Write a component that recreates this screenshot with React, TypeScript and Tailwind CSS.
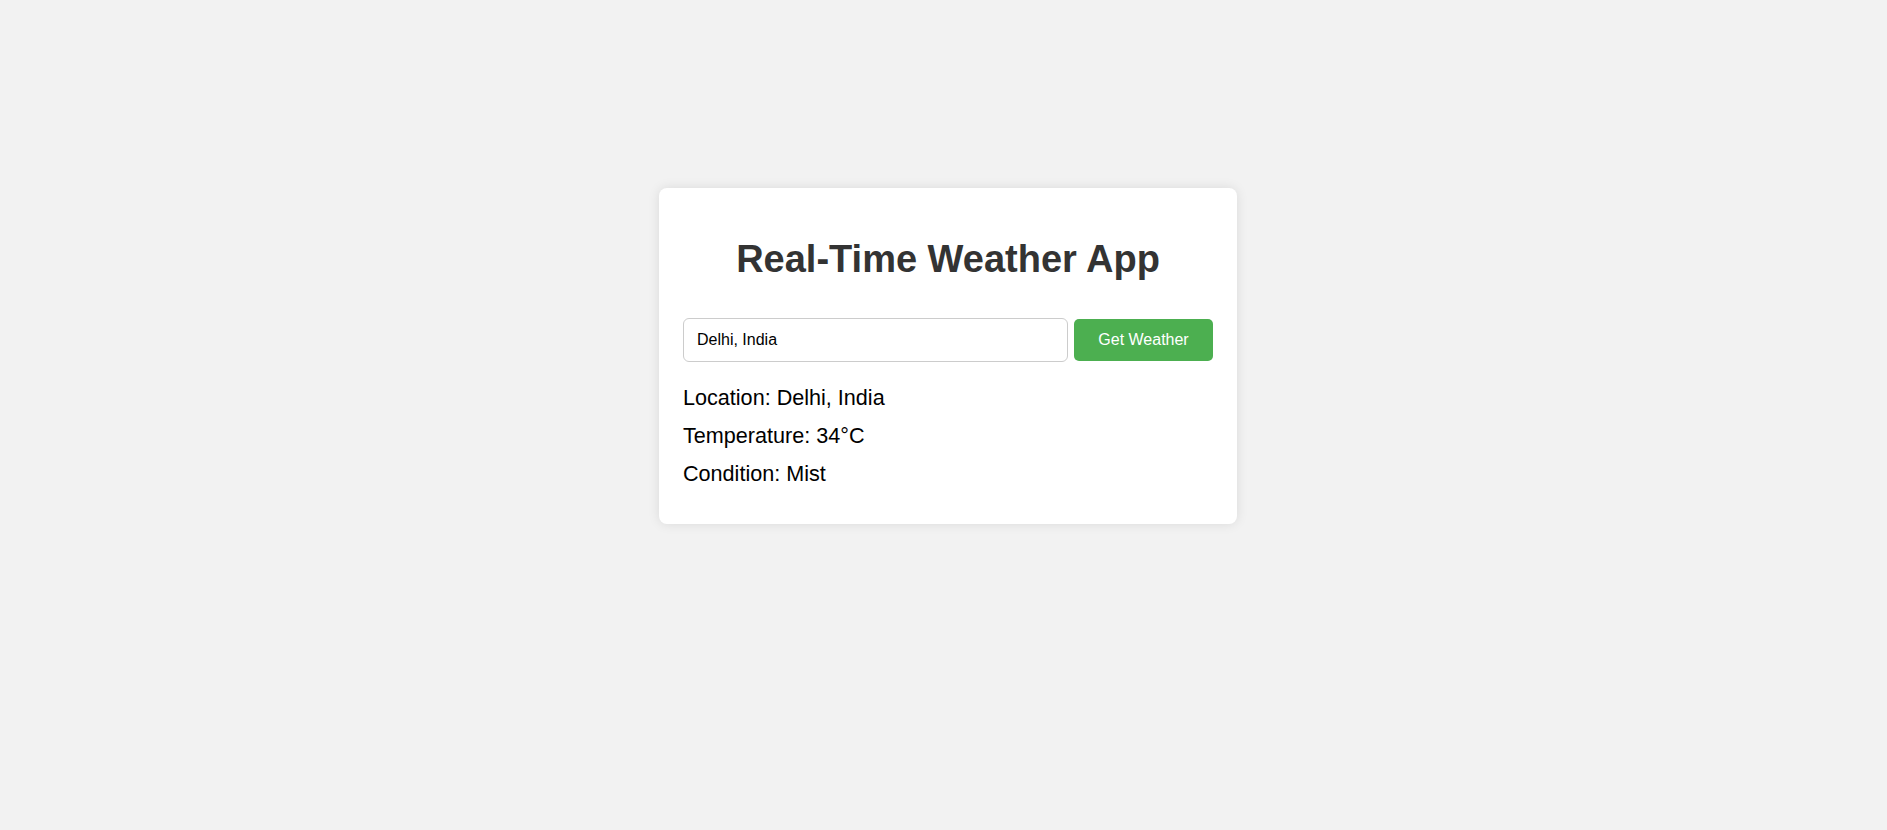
import { useState } from 'react';

export default function App() {
  const [city, setCity] = useState('Delhi, India');

  const weather = {
    location: 'Delhi, India',
    temperature: '34°C',
    condition: 'Mist',
  };

  return (
    <div className="min-h-screen bg-[#f2f2f2] pt-[188px] pl-[9px] font-['Liberation_Sans',Arial,sans-serif]">
      <div className="mx-auto w-[578px] rounded-[8px] bg-white px-[24px] pt-[24px] pb-[31px] shadow-[0_0_12px_rgba(0,0,0,0.1)]">
        <h1 className="mt-[25px] mb-[37px] text-center text-[38px] leading-[44px] font-bold text-[#333]">
          Real-Time Weather App
        </h1>

        {/* Search row */}
        <div className="flex items-start gap-[6px]">
          <input
            value={city}
            onChange={(e) => setCity(e.target.value)}
            className="h-[44px] w-[385px] rounded-[6px] border border-[#ccc] px-[13px] text-[16px] text-black outline-none"
          />
          <button className="mt-[1px] h-[42px] w-[139px] rounded-[5px] bg-[#4caf50] text-[16px] text-white">
            Get Weather
          </button>
        </div>

        {/* Result */}
        <div className="mt-[17px] text-[21.6px] leading-[38px] text-black">
          <p>Location: {weather.location}</p>
          <p>Temperature: {weather.temperature}</p>
          <p>Condition: {weather.condition}</p>
        </div>
      </div>
    </div>
  );
}
